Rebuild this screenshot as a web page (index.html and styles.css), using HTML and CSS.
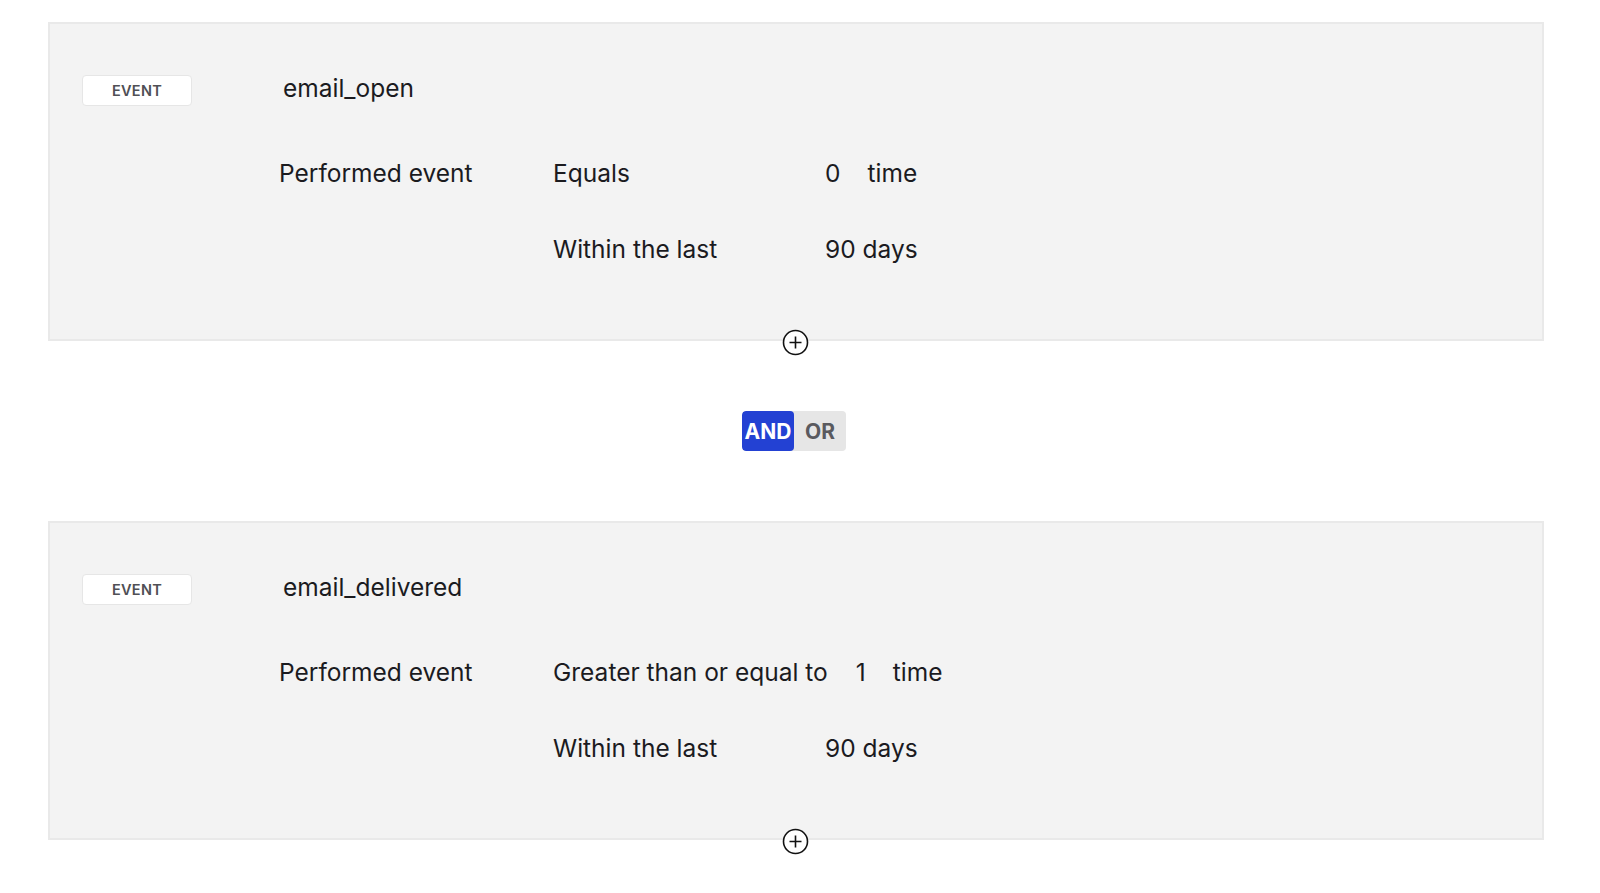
FILE: index.html
```html
<!DOCTYPE html>
<html lang="en">
<head>
<meta charset="utf-8">
<title>Segment conditions</title>
<link rel="stylesheet" href="styles.css">
</head>
<body>
<div class="page">
  <section class="card">
    <div class="card-head">
      <span class="badge">EVENT</span>
      <span class="event-name">email_open</span>
    </div>
    <div class="rows">
      <div class="row">
        <span class="c1">Performed event</span>
        <span class="c2">Equals</span>
        <span class="c3">0</span>
        <span class="c4">time</span>
      </div>
      <div class="row">
        <span class="c1"></span>
        <span class="c2">Within the last</span>
        <span class="c3">90 days</span>
      </div>
    </div>
    <span class="add" aria-label="Add condition">
      <svg width="27" height="27" viewBox="0 0 27 27"><circle cx="13.5" cy="13.5" r="12" fill="#fff" stroke="#111" stroke-width="1.6"/><path d="M13.5 7.5v12M7.5 13.5h12" stroke="#111" stroke-width="1.6" fill="none"/></svg>
    </span>
  </section>

  <div class="join">
    <div class="toggle">
      <span class="opt active">AND</span>
      <span class="opt">OR</span>
    </div>
  </div>

  <section class="card">
    <div class="card-head">
      <span class="badge">EVENT</span>
      <span class="event-name">email_delivered</span>
    </div>
    <div class="rows">
      <div class="row">
        <span class="c1">Performed event</span>
        <span class="c2">Greater than or equal to</span>
        <span class="c3">1</span>
        <span class="c4">time</span>
      </div>
      <div class="row">
        <span class="c1"></span>
        <span class="c2">Within the last</span>
        <span class="c3">90 days</span>
      </div>
    </div>
    <span class="add" aria-label="Add condition">
      <svg width="27" height="27" viewBox="0 0 27 27"><circle cx="13.5" cy="13.5" r="12" fill="#fff" stroke="#111" stroke-width="1.6"/><path d="M13.5 7.5v12M7.5 13.5h12" stroke="#111" stroke-width="1.6" fill="none"/></svg>
    </span>
  </section>
</div>
</body>
</html>
```

FILE: styles.css
```css
* { box-sizing: border-box; }
html, body {
  margin: 0;
  padding: 0;
  width: 1600px;
  height: 893px;
  overflow: hidden;
  background: #fff;
}
body {
  font-family: Inter, "Noto Sans", "Liberation Sans", sans-serif;
  color: #1b1b1f;
}
.page {
  padding: 22px 56px 0 48px;
}
.card {
  position: relative;
  background: #f3f3f3;
  border: 2px solid #e9e9e9;
  height: 319px;
  padding: 51px 0 0 32px;
}
.card-head {
  display: flex;
  align-items: center;
  height: 31px;
}
.badge {
  display: inline-flex;
  align-items: center;
  justify-content: center;
  width: 110px;
  height: 31px;
  background: #fff;
  border: 1.5px solid #e6e6e6;
  border-radius: 4px;
  font-size: 14.5px;
  font-weight: 600;
  letter-spacing: 0.3px;
  color: #505055;
}
.event-name {
  margin-left: 91px;
  font-size: 24.5px;
  line-height: 31px;
  padding-bottom: 4px;
}
.rows {
  padding-left: 197px;
  margin-top: 47px;
  display: flex;
  flex-direction: column;
  gap: 36px;
}
.row {
  display: flex;
  align-items: center;
  height: 40px;
  font-size: 24.5px;
}
.c1 { width: 274px; flex: none; }
.c2 { min-width: 244px; margin-right: 28px; white-space: nowrap; }
.c3 { margin-right: 27px; white-space: nowrap; }
.c4 { white-space: nowrap; }
.add {
  position: absolute;
  left: 50%;
  bottom: -17px;
  margin-left: -14px;
  width: 27px;
  height: 27px;
  display: block;
}
.add svg { display: block; }
.join {
  height: 180px;
  display: flex;
  align-items: center;
  justify-content: center;
}
.toggle {
  display: flex;
  height: 40px;
  border-radius: 4px;
  overflow: hidden;
  background: #e6e6e6;
  margin-left: -4px;
}
.opt {
  display: flex;
  align-items: center;
  justify-content: center;
  width: 52px;
  font-size: 21px;
  font-weight: 700;
  color: #5a5a5f;
}
.opt.active {
  background: #2341d3;
  color: #fff;
  border-radius: 4px;
}
```
